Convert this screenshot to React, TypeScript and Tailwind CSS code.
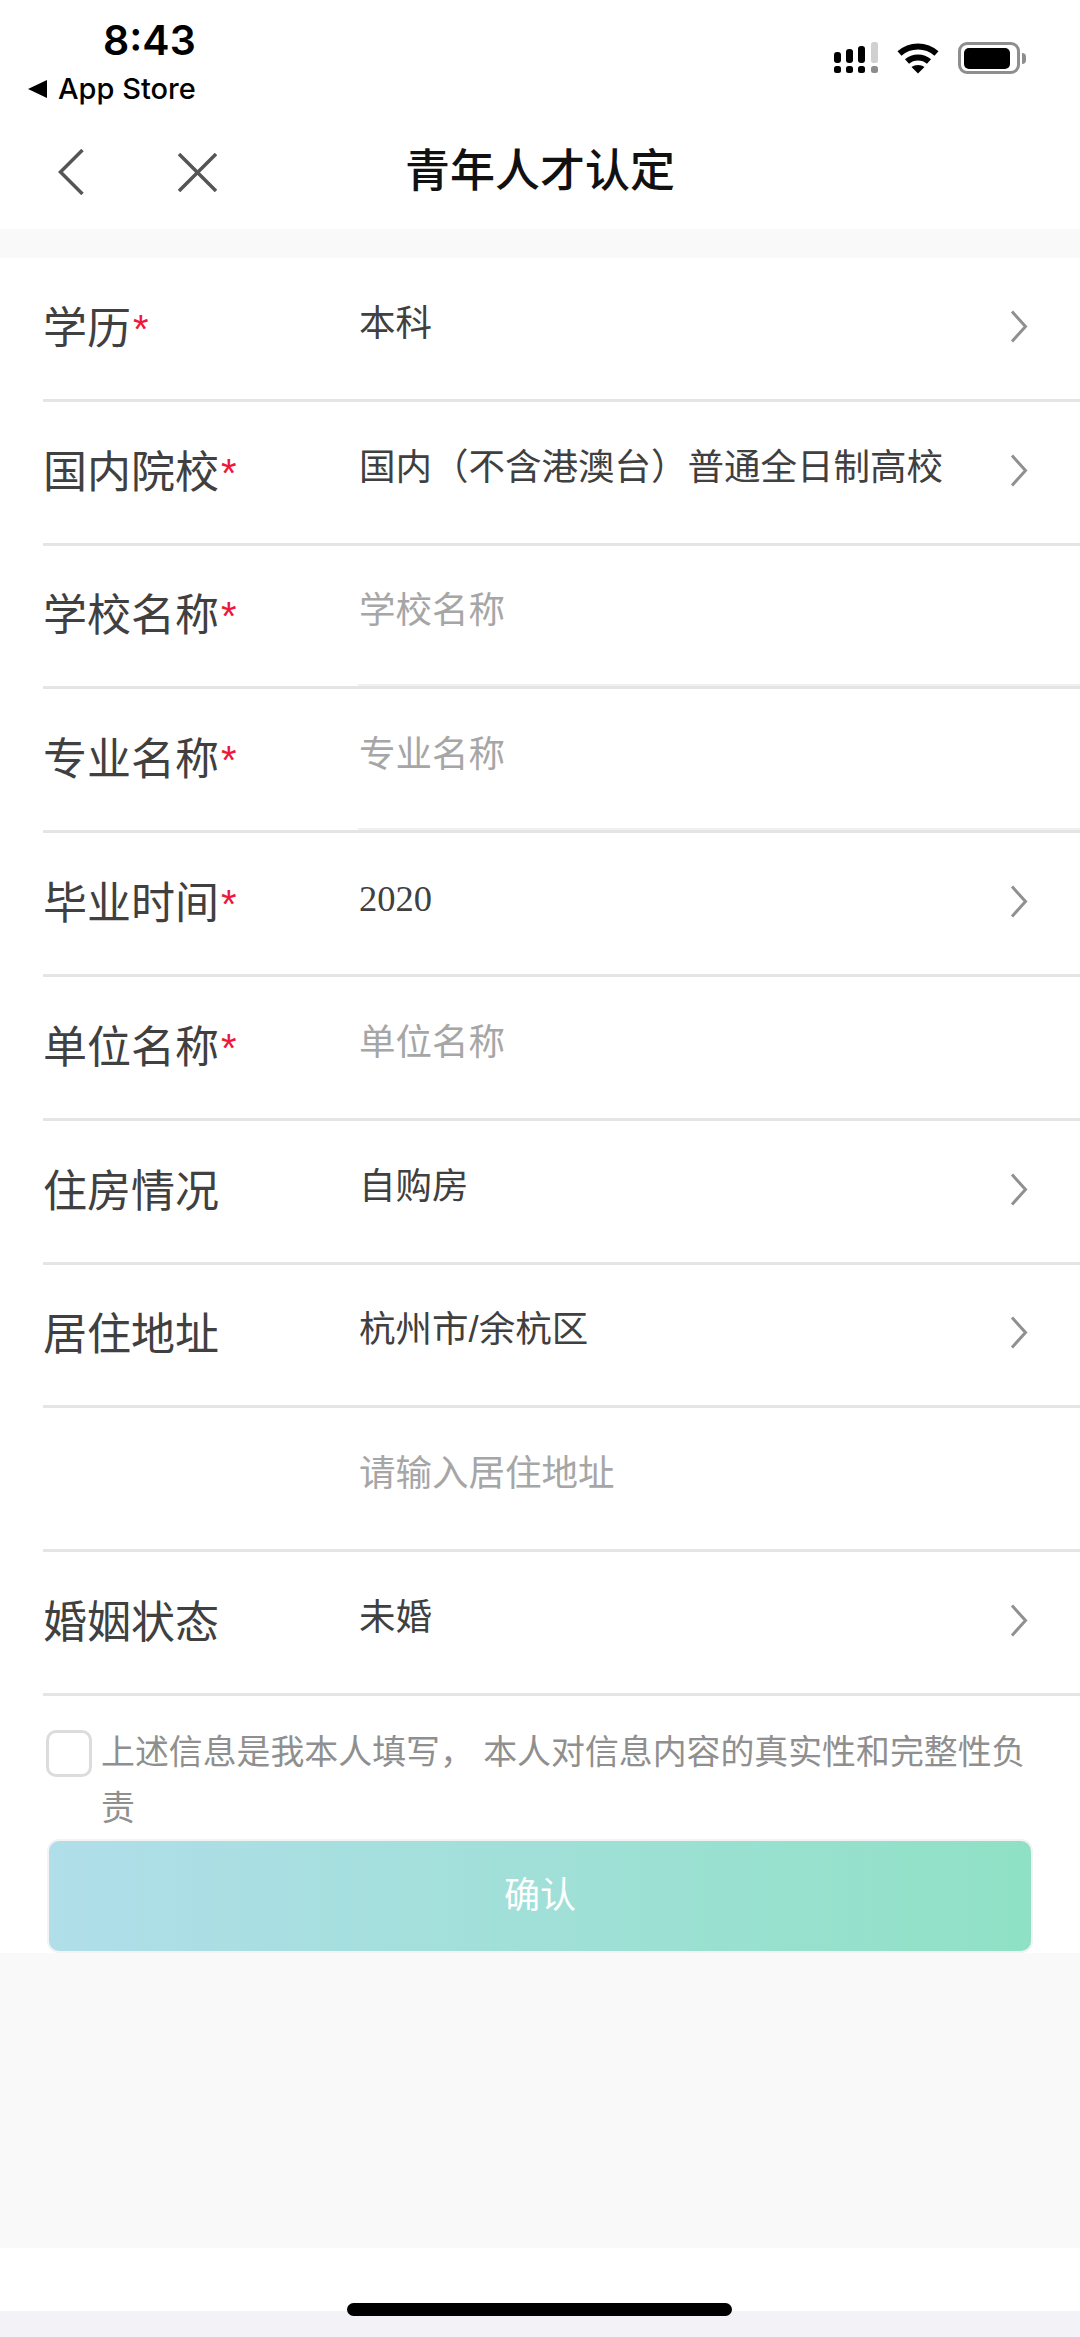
const cjk = "font-['Liberation_Sans','Noto_Sans_CJK_SC',sans-serif]"

type Row = {
  label: string
  required?: boolean
  value?: string
  placeholder?: string
  arrow?: boolean
  serif?: boolean
  inputLine?: boolean
}

const rows: Row[] = [
  { label: '学历', required: true, value: '本科', arrow: true },
  { label: '国内院校', required: true, value: '国内（不含港澳台）普通全日制高校', arrow: true },
  { label: '学校名称', required: true, placeholder: '学校名称', inputLine: true },
  { label: '专业名称', required: true, placeholder: '专业名称', inputLine: true },
  { label: '毕业时间', required: true, value: '2020', arrow: true, serif: true },
  { label: '单位名称', required: true, placeholder: '单位名称' },
  { label: '住房情况', value: '自购房', arrow: true },
  { label: '居住地址', value: '杭州市/余杭区', arrow: true },
  { label: '', placeholder: '请输入居住地址' },
  { label: '婚姻状态', value: '未婚', arrow: true },
]

function StatusIcons() {
  return (
    <div className="flex items-start gap-[19px] pt-[42px]">
      <svg width="44" height="32" viewBox="0 0 44 32" fill="#000">
        <rect x="0" y="24" width="7" height="7" rx="2.5" />
        <rect x="12" y="24" width="7" height="7" rx="2.5" />
        <rect x="24" y="24" width="7" height="7" rx="2.5" />
        <rect x="37" y="24" width="7" height="7" rx="2.5" fill="#8c8c8c" />
        <rect x="0" y="10" width="7" height="11" rx="3" />
        <rect x="12" y="7" width="7" height="14" rx="3" />
        <rect x="24" y="4" width="7" height="17" rx="3" />
        <rect x="37" y="0" width="7" height="21" rx="2.5" fill="#d0d0d0" />
      </svg>
      <svg width="42" height="32" viewBox="0 0 42 32" fill="none" stroke="#000" strokeWidth="6">
        <path d="M2.5 11.5 C13 2 29 2 39.5 11.5" />
        <path d="M10 19.5 C16 14 26 14 32 19.5" />
        <path d="M21 31.5 L14.5 25 C18 22.3 24 22.3 27.5 25 Z" fill="#000" stroke="none" />
      </svg>
      <div className="flex items-center gap-[2px]">
        <div className="flex h-[32px] w-[62px] items-center rounded-[9px] border-[3px] border-[#8e8e8e] p-[3px] pr-[7px]">
          <div className="h-[21px] w-full rounded-[5px] bg-black" />
        </div>
        <div className="h-[11px] w-[4px] rounded-r-full bg-[#8e8e8e]" />
      </div>
    </div>
  )
}

function Chevron() {
  return (
    <svg width="18" height="33" viewBox="0 0 18 33" fill="none" stroke="#909090" strokeWidth="3" className="mb-[4px]">
      <path d="M2 1.5 L15.5 16.5 L2 31.5" />
    </svg>
  )
}

export default function App() {
  return (
    <div className={`relative flex h-[2337px] w-[1080px] flex-col overflow-hidden bg-white ${cjk}`}>
      {/* status bar */}
      <div className="flex h-[114px] shrink-0 justify-between pr-[54px]">
        <div className="flex flex-col pl-[28px]">
          <span className="mt-[16px] ml-[75px] font-['Inter',sans-serif] text-[41px] leading-[48px] font-semibold text-black">
            8:43
          </span>
          <div className="mt-[8px] flex items-center gap-[11px]">
            <svg width="19" height="18" viewBox="0 0 19 18" fill="#000">
              <path d="M19 0 V18 L0 9 Z" />
            </svg>
            <span className="font-['Inter',sans-serif] text-[29px] leading-[34px] font-medium text-black">
              App Store
            </span>
          </div>
        </div>
        <StatusIcons />
      </div>

      {/* nav bar */}
      <div className="relative flex h-[115px] shrink-0 items-center justify-center">
        <div className="absolute top-[35px] left-[58px] flex items-start gap-[94px]">
          <svg width="26" height="46" viewBox="0 0 26 46" fill="none" stroke="#555" strokeWidth="3.5">
            <path d="M24.5 1 L2.5 23 L24.5 45" />
          </svg>
          <svg width="39" height="39" viewBox="0 0 39 39" fill="none" stroke="#555" strokeWidth="3.5" className="mt-[4px]">
            <path d="M1 1 L38 38 M38 1 L1 38" />
          </svg>
        </div>
        <span className="text-[45px] leading-[56px] font-medium text-[#111]">青年人才认定</span>
      </div>

      <div className="h-[29px] shrink-0 bg-[#f9f9f9]" />

      {/* form */}
      <div className="flex h-[1695px] shrink-0 flex-col bg-white">
        {rows.map((row, i) => (
          <div
            key={i}
            className="relative ml-[43px] flex h-[143.8px] shrink-0 items-center border-b-[3px] border-[#e5e5e5] pr-[52px]"
          >
            <div className="flex w-[316px] items-center pt-[1px] text-[44px] leading-[56px] text-[#404040]">
              {row.label}
              {row.required && (
                <span className="ml-[2px] text-[40px] leading-[40px] text-[#f0163a]">*</span>
              )}
            </div>
            <div
              className={`flex-1 pb-[9px] text-[36.5px] leading-[48px] ${row.placeholder ? 'text-[#a6a6a6]' : 'text-[#404040]'} ${row.serif ? "font-['Liberation_Serif',serif]" : ''}`}
            >
              {row.value || row.placeholder}
            </div>
            {row.arrow && <Chevron />}
            {row.inputLine && <div className="absolute right-0 bottom-0 left-[315px] h-[2px] bg-[#f0f0f0]" />}
          </div>
        ))}

        {/* agreement */}
        <div className="mt-[28px] flex pl-[46px] pr-[50px]">
          <div className="mt-[6px] h-[47px] w-[46px] shrink-0 rounded-[10px] border-[3px] border-[#dcdcdc]" />
          <p className="ml-[9px] text-[33.9px] leading-[56px] text-[#8f8f8f]">
            上述信息是我本人填写， 本人对信息内容的真实性和完整性负责
          </p>
        </div>

        <button className="mx-[47px] mt-[3px] flex h-[114px] shrink-0 items-center justify-center rounded-[12px] border-2 border-[#f3f3f3] bg-gradient-to-r from-[#b0deea] to-[#8fe1c5] text-[36px] text-white">
          确认
        </button>
      </div>

      <div className="flex-1 bg-[#f9f9f9]" />
      <div className="h-[63px] shrink-0 bg-white" />
      <div className="h-[26px] shrink-0 bg-[#f2f2f7]" />

      {/* home indicator */}
      <div className="absolute top-[2303px] left-[347px] h-[13px] w-[385px] rounded-full bg-black" />
    </div>
  )
}
